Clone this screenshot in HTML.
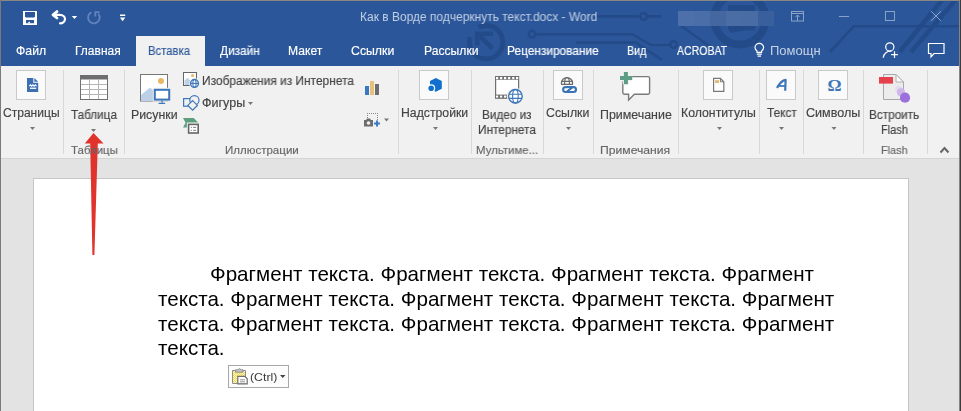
<!DOCTYPE html>
<html><head><meta charset="utf-8">
<style>
html,body{margin:0;padding:0;}
body{width:961px;height:411px;overflow:hidden;position:relative;background:#e3e3e3;font-family:"Liberation Sans",sans-serif;}
.t{position:absolute;white-space:nowrap;transform-origin:0 0;will-change:transform;}
.u{-webkit-text-stroke:0.15px currentColor;}
.a{position:absolute;}
svg{position:absolute;overflow:visible;}
</style></head><body>
<!-- title bar -->
<div class="a" style="left:0;top:0;width:961px;height:66px;background:#2b579a"></div>
<!-- circuit pattern -->
<svg style="left:0;top:0" width="961" height="66" viewBox="0 0 961 66">
 <g fill="none" stroke="#244b89" stroke-width="2.6">
  <path d="M470.2 37 A16.7 16.7 0 1 0 478.5 27.3" stroke-width="5"/>
  <path d="M477.2 45.5 V33.7 H493 M478.5 35 L492.5 48.5" stroke-width="4.6"/>
  <path d="M535.7 34.2 H632.4 L651 45 H670"/>
  <circle cx="532.2" cy="34.2" r="3.4"/>
  <circle cx="673.6" cy="44.5" r="3.4"/>
  <path d="M576 42.6 H636 L662 60"/>
  <path d="M596.8 16.4 H640.2 M647 16.4 H661.4"/>
  <circle cx="643.6" cy="16.4" r="3.4"/>
  <path d="M681 25.8 L712 48" />
  <circle cx="739.8" cy="19" r="25.5" stroke-width="8"/>
  <path d="M830 52 L853.6 26.3 H961"/>
  <path d="M899.6 52 L942 0 M911 52 L955.5 0" stroke-width="4.5"/>
 </g>
 <path d="M728 5 H755.3 V30.4 H745 L731 33 L728 29 Z" fill="#244b89"/>
</svg>
<!-- window frame -->
<div class="a" style="left:0;top:0;width:961px;height:1px;background:#8a8883"></div>
<div class="a" style="left:0;top:0;width:1px;height:411px;background:#7a7a7a"></div>
<div class="a" style="left:959px;top:0;width:1px;height:411px;background:#858585"></div>
<div class="a" style="left:960px;top:0;width:1px;height:411px;background:#3c3c3c"></div>
<!-- QAT -->
<svg style="left:0;top:0" width="140" height="34">
 <rect x="23" y="11" width="14" height="14" fill="#fff"/>
 <path d="M25 12 H35 V16.5 L34 17.5 H26 L25 16.5 Z" fill="#2b579a"/>
 <rect x="26" y="20" width="8" height="3.2" fill="#2b579a"/>
 <rect x="28.3" y="21.8" width="1.8" height="1.4" fill="#fff"/>
 <g fill="none" stroke="#fff" stroke-linecap="round" stroke-linejoin="round">
  <path d="M54 14.8 H60 A5 4.25 0 0 1 60 23.3" stroke-width="2.2"/>
  <path d="M57 11.6 L53 14.8 L57 18" stroke-width="2.8"/>
 </g>
 <path d="M71.8 16 H77.2 L74.5 19 Z" fill="#fff"/>
 <g fill="none" stroke="#6384be" stroke-width="1.8">
  <path d="M98.3 13.8 A5.8 5.8 0 1 1 91.5 12.2"/>
  <path d="M95.3 16.5 V12.2 H99.6"/>
 </g>
 <rect x="120" y="14.5" width="5.2" height="1.5" fill="#fff"/>
 <path d="M119.9 17.6 H125.3 L122.6 21.2 Z" fill="#fff"/>
</svg>
<!-- username blur -->
<div class="a" style="left:678px;top:11px;width:16px;height:15px;background:#4d70aa"></div>
<div class="a" style="left:694px;top:11px;width:16px;height:15px;background:#4a6ea8"></div>
<div class="a" style="left:710px;top:11px;width:16px;height:15px;background:#44679f"></div>
<div class="a" style="left:726px;top:11px;width:16px;height:15px;background:#4b6da6"></div>
<div class="a" style="left:742px;top:11px;width:16px;height:15px;background:#4a6ca5"></div>
<div class="a" style="left:758px;top:11px;width:16px;height:15px;background:#39609c"></div>
<!-- window buttons -->
<svg style="left:0;top:0" width="961" height="34">
 <g fill="none" stroke="#8aa1c8" stroke-width="1">
  <rect x="791.5" y="11.5" width="12" height="9.5"/>
  <path d="M791.5 13.5 H803.5 M797.5 21 V15 M795.5 17 L797.5 15 L799.5 17"/>
  <path d="M839 16.5 H849"/>
  <rect x="885.5" y="11.5" width="9" height="9"/>
  <path d="M931 11 L941 21 M941 11 L931 21"/>
 </g>
</svg>
<!-- active tab -->
<div class="a" style="left:136px;top:36px;width:69px;height:30px;background:#f1f1f1"></div>
<!-- tell me / share / comments -->
<svg style="left:0;top:0" width="961" height="66">
 <g fill="none" stroke="#fff" stroke-width="1.2">
  <path d="M757 52.3 V51 Q755 49.4 755 47.6 A4.3 4.3 0 1 1 763.6 47.6 Q763.6 49.4 761.6 51 V52.3 Z"/>
  <path d="M756.8 54.2 H761.8 M757.6 56.2 H761"/>
  <circle cx="889.8" cy="46.9" r="4.1"/>
  <path d="M883.2 57.8 A7.2 7.2 0 0 1 891.5 51.2"/>
  <path d="M894.5 51.2 V58 M891.1 54.6 H897.9"/>
  <path d="M928.5 43.5 H944 V53.5 H934 L931 57 V53.5 H928.5 Z"/>
 </g>
</svg>
<!-- ribbon -->
<div class="a" style="left:1px;top:66px;width:958px;height:92px;background:#f1f1f1"></div>
<div class="a" style="left:1px;top:158px;width:958px;height:1px;background:#d4d4d4"></div>
<!-- separators -->
<div class="a" style="left:63px;top:70px;width:1px;height:84px;background:#d8d8d8"></div>
<div class="a" style="left:124px;top:70px;width:1px;height:84px;background:#d8d8d8"></div>
<div class="a" style="left:398px;top:70px;width:1px;height:84px;background:#d8d8d8"></div>
<div class="a" style="left:471px;top:70px;width:1px;height:84px;background:#d8d8d8"></div>
<div class="a" style="left:543px;top:70px;width:1px;height:84px;background:#d8d8d8"></div>
<div class="a" style="left:593px;top:70px;width:1px;height:84px;background:#d8d8d8"></div>
<div class="a" style="left:678px;top:70px;width:1px;height:84px;background:#d8d8d8"></div>
<div class="a" style="left:759px;top:70px;width:1px;height:84px;background:#d8d8d8"></div>
<div class="a" style="left:803px;top:70px;width:1px;height:84px;background:#d8d8d8"></div>
<div class="a" style="left:863px;top:70px;width:1px;height:84px;background:#d8d8d8"></div>
<div class="a" style="left:927px;top:70px;width:1px;height:84px;background:#d8d8d8"></div>
<!-- icon boxes -->
<div class="a" style="left:16px;top:70px;width:28px;height:28px;background:#fafafa;border:1px solid #c9c9c9"></div>
<div class="a" style="left:419px;top:70px;width:28px;height:28px;background:#fafafa;border:1px solid #c9c9c9"></div>
<div class="a" style="left:553px;top:70px;width:28px;height:28px;background:#fafafa;border:1px solid #c9c9c9"></div>
<div class="a" style="left:703px;top:70px;width:28px;height:28px;background:#fafafa;border:1px solid #c9c9c9"></div>
<div class="a" style="left:766px;top:70px;width:28px;height:28px;background:#fafafa;border:1px solid #c9c9c9"></div>
<div class="a" style="left:818px;top:70px;width:28px;height:28px;background:#fafafa;border:1px solid #c9c9c9"></div>
<!-- ribbon icons -->
<svg style="left:0;top:0" width="961" height="160">
 <!-- pages icon -->
 <path d="M27 78 H33.3 V82.7 H38.2 V92 H27 Z" fill="#3e6fb3"/>
 <path d="M34.3 78 V81.7 H38.2 Z" fill="#3e6fb3"/>
 <path d="M29.3 86.2 L30.5 84.8 L31.7 86.2 L32.9 84.8 L34.1 86.2 L35.3 84.8 L36.5 86.2" fill="none" stroke="#fff" stroke-width="1.2"/>
 <rect x="30" y="87.6" width="6.2" height="1.3" fill="#fff"/>
 <!-- table -->
 <rect x="80.5" y="75.5" width="27" height="24" fill="#fff" stroke="#707070"/>
 <rect x="80" y="75" width="28" height="4.5" fill="#6e6e6e"/>
 <g stroke="#b4b4b4" stroke-width="1">
  <path d="M81 84.5 H107 M81 89.5 H107 M81 94.5 H107 M89.5 79.5 V99 M98.5 79.5 V99"/>
 </g>
 <!-- dropdown arrows -->
 <g fill="#777">
  <path d="M30 127 H35 L32.5 130 Z"/>
  <path d="M91 129 H96 L93.5 132 Z"/>
  <path d="M433 127 H438 L435.5 130 Z"/>
  <path d="M566 127 H571 L568.5 130 Z"/>
  <path d="M717 127 H722 L719.5 130 Z"/>
  <path d="M779 127 H784 L781.5 130 Z"/>
  <path d="M831.5 127 H836.5 L834 130 Z"/>
  <path d="M248 102 H253 L250.5 105 Z"/>
  <path d="M384 118.5 H389 L386.5 121.5 Z"/>
 </g>
 <!-- pictures -->
 <rect x="140.5" y="74.5" width="27" height="26.5" fill="#fff" stroke="#777"/>
 <circle cx="161" cy="81" r="3" fill="#e8b865"/>
 <path d="M141 101 V95 L149 88.3 Q150 87.5 151 88.3 L154 91 V101 Z" fill="#bcd0e8"/>
 <rect x="152.8" y="87.8" width="18.4" height="13.8" fill="#f1f1f1"/>
 <rect x="154.8" y="89.8" width="14.4" height="9.8" fill="#fff" stroke="#3d76b9" stroke-width="2"/>
 <path d="M162 100.5 V102.5 M158.6 103.4 H165.1" stroke="#3d76b9" stroke-width="1.3"/>
 <!-- online pictures small -->
 <rect x="183.5" y="72.5" width="13" height="13" fill="#fff" stroke="#666"/>
 <circle cx="192.5" cy="75.5" r="1.5" fill="#e8b865"/>
 <path d="M184.5 85 V80.5 L187.5 77.8 L190.3 80.5 V85 Z" fill="#bcd0e8"/>
 <circle cx="194.5" cy="83.4" r="5.3" fill="#f1f1f1"/>
 <circle cx="194.5" cy="83.4" r="3.9" fill="#fff" stroke="#3d76b9" stroke-width="1.4"/>
 <ellipse cx="194.5" cy="83.4" rx="1.6" ry="3.9" fill="none" stroke="#3d76b9" stroke-width="1.1"/>
 <path d="M191 83.4 H198" stroke="#3d76b9" stroke-width="1.1"/>
 <!-- shapes -->
 <rect x="183.6" y="98.6" width="7.6" height="7.6" fill="none" stroke="#3d76b9" stroke-width="1.2"/>
 <circle cx="194.4" cy="100.2" r="4.6" fill="#f1f1f1" stroke="#3d76b9" stroke-width="1.2"/>
 <path d="M192.6 100.6 L197.4 105.4 L192.6 110.2 L187.8 105.4 Z" fill="#f1f1f1" stroke="#3d76b9" stroke-width="1.2"/>
 <!-- smartart -->
 <path d="M183 118 H193.7 L198.3 122.8 H188 V127.4 H183 L185.6 122.7 Z" fill="#5b9e80"/>
 <rect x="186.8" y="122.6" width="13.2" height="12.2" fill="#f1f1f1"/>
 <rect x="188.6" y="124.4" width="9.6" height="8.6" fill="#fff" stroke="#666" stroke-width="1.6"/>
 <g fill="#8a8a8a"><rect x="190.8" y="126.9" width="1.1" height="1.1"/><rect x="190.8" y="129.8" width="1.1" height="1.1"/><rect x="193.1" y="126.9" width="3" height="1.1"/><rect x="193.1" y="129.8" width="3" height="1.1"/></g>
 <!-- chart -->
 <rect x="365" y="86" width="4" height="9" fill="#3b78c2"/>
 <rect x="370" y="81" width="4" height="14" fill="#e8c07a"/>
 <rect x="375" y="84" width="4" height="11" fill="#6d6d6d"/>
 <!-- screenshot -->
 <g fill="#8a8a8a"><rect x="367" y="113" width="1" height="1"/><rect x="369" y="113" width="1" height="1"/><rect x="371" y="113" width="1" height="1"/><rect x="373" y="113" width="1" height="1"/><rect x="375" y="113" width="1" height="1"/><rect x="377" y="113" width="1" height="1"/><rect x="377" y="115" width="1" height="1"/><rect x="377" y="117" width="1" height="1"/><rect x="377" y="119" width="1" height="1"/><rect x="377" y="121" width="1" height="1"/><rect x="367" y="115" width="1" height="1"/><rect x="367" y="117" width="1" height="1"/><rect x="367" y="119" width="1" height="1"/></g>
 <path d="M364 120 H366 L367 118.5 H370 L371 120 H373 V126.5 H364 Z" fill="#6d6d6d"/>
 <circle cx="368.5" cy="123" r="1.8" fill="#f1f1f1"/>
 <path d="M377 120.5 V126.5 M374 123.5 H380" stroke="#3e7ac3" stroke-width="2"/>
 <!-- addins hex -->
 <path d="M435.8 78 L441.8 81 V88.8 L435.8 91.8 L430 88.8 V81 Z" fill="#1170cd"/>
 <circle cx="431.2" cy="88.3" r="3.4" fill="#1170cd" stroke="#fcfcfc" stroke-width="1.2"/>
 <!-- video -->
 <rect x="495.6" y="76.6" width="23" height="21.4" fill="#fff" stroke="#707070" stroke-width="1.2"/>
 <rect x="495" y="76" width="24" height="3.8" fill="#707070"/>
 <rect x="495" y="94.6" width="24" height="4" fill="#707070"/>
 <g fill="#fff"><rect x="496" y="77" width="2.2" height="2.2"/><rect x="500" y="77" width="2.2" height="2.2"/><rect x="504" y="77" width="2.2" height="2.2"/><rect x="508" y="77" width="2.2" height="2.2"/><rect x="512.2" y="77" width="2.2" height="2.2"/><rect x="516" y="77" width="2.2" height="2.2"/><rect x="496" y="95.6" width="2.2" height="2"/><rect x="500" y="95.6" width="2.2" height="2"/><rect x="504" y="95.6" width="2.2" height="2"/></g>
 <circle cx="515.4" cy="96.3" r="8.6" fill="#f1f1f1"/>
 <circle cx="515.4" cy="96.3" r="6.8" fill="#fff" stroke="#3d76b9" stroke-width="1.4"/>
 <g fill="none" stroke="#3d76b9" stroke-width="1.1">
  <ellipse cx="515.4" cy="96.3" rx="2.8" ry="6.8"/>
  <path d="M509 94.2 H522 M509 98.4 H522"/>
 </g>
 <!-- links -->
 <g fill="none" stroke="#6a6a6a" stroke-width="1.2">
  <circle cx="567" cy="83.2" r="5.6"/>
  <ellipse cx="567" cy="83.2" rx="2.4" ry="5.6"/>
  <path d="M561.5 81.3 H572.5 M561.5 84.3 H572.5"/>
 </g>
 <rect x="560" y="85" width="18" height="9" fill="#fcfcfc"/>
 <g fill="none" stroke="#3a74b8" stroke-width="2.1">
  <rect x="563.1" y="87.1" width="12.9" height="4.9" rx="2.45"/>
  <path d="M566.8 91.6 L572.3 87.5"/>
 </g>
 <path d="M566.2 90 L568.3 88.6 M570.8 90.6 L572.9 89.1" stroke="#fcfcfc" stroke-width="0.8"/>
 <!-- comment -->
 <path d="M622.8 76.6 H648 Q649.6 76.6 649.6 78.2 V92.6 Q649.6 94.2 648 94.2 H634.4 L628.6 100 V94.2 H624.4 Q622.8 94.2 622.8 92.6 Z" fill="#fff" stroke="#7a7a7a" stroke-width="1.4"/>
 <path d="M625.9 72 V84.2 M620 77.9 H632.2" stroke="#f1f1f1" stroke-width="6.5"/>
 <path d="M625.9 72 V84.2 M620 77.9 H632.2" stroke="#5c9e84" stroke-width="4"/>
 <!-- header/footer -->
 <path d="M713.6 78.4 H720.4 L723.8 81.8 V91.3 H713.6 Z" fill="#fff" stroke="#777" stroke-width="1.2"/>
 <path d="M720.4 78.4 V81.8 H723.8" fill="none" stroke="#777" stroke-width="1"/>
 <rect x="715.1" y="80.2" width="3.9" height="2.8" fill="#e6b76a"/>
 <!-- text A -->
 <path d="M777 88 Q781 80.5 785.6 79.9 L785.2 90.8" fill="none" stroke="#3e76b9" stroke-width="2.2" stroke-linejoin="round"/>
 <path d="M777.5 86 H785.5" fill="none" stroke="#3e76b9" stroke-width="1.8"/>
 <!-- omega -->
 <text x="834.4" y="90.8" font-family="Liberation Serif" font-size="17.5" font-weight="bold" fill="#3e76b9" text-anchor="middle">Ω</text>
 <!-- flash -->
 <path d="M883.5 74.5 H896 L903.5 82 V99.5 H883.5 Z" fill="#ececec" stroke="#a8a8a8"/>
 <path d="M896 74.5 V82 H903.5 Z" fill="#fafafa" stroke="#b0b0b0"/>
 <rect x="879" y="77" width="14" height="6.6" fill="#e5404b"/>
 <circle cx="898.8" cy="89.4" r="3.6" fill="#e6dcf2"/>
 <circle cx="901" cy="92.2" r="4" fill="#cdb7ea"/>
 <circle cx="905" cy="97.7" r="5.1" fill="#9b70dc"/>
 <!-- chevron -->
 <path d="M940.5 152.5 L944.5 148 L948.5 152.5" fill="none" stroke="#666" stroke-width="2"/>
</svg>
<!-- document page -->
<div class="a" style="left:33px;top:178px;width:874px;height:240px;background:#fff;border:1px solid #c6c6c6"></div>
<div class="t" style="left:210px;top:262.3px;font-size:20.6px;line-height:24.7px;color:#000">Фрагмент текста. Фрагмент текста. Фрагмент текста. Фрагмент</div>
<div class="t" style="left:158px;top:286.9px;font-size:20.6px;line-height:24.7px;color:#000">текста. Фрагмент текста. Фрагмент текста. Фрагмент текста. Фрагмент</div>
<div class="t" style="left:158px;top:311.6px;font-size:20.6px;line-height:24.7px;color:#000">текста. Фрагмент текста. Фрагмент текста. Фрагмент текста. Фрагмент</div>
<div class="t" style="left:158px;top:336.3px;font-size:20.6px;line-height:24.7px;color:#000">текста.</div>
<!-- paste options -->
<div class="a" style="left:228px;top:365px;width:59px;height:21px;background:#fdfdfd;border:1px solid #a8a8a8"></div>
<svg style="left:0;top:0" width="961" height="411">
 <defs><pattern id="chk" width="2" height="2" patternUnits="userSpaceOnUse"><rect width="2" height="2" fill="#fff7c8"/><rect width="1" height="1" fill="#f2d94a"/><rect x="1" y="1" width="1" height="1" fill="#f2d94a"/></pattern></defs>
 <path d="M232.5 370.5 H245.5 V383.5 H232.5 Z" fill="url(#chk)" stroke="#8c8c8c"/>
 <path d="M235.5 369.8 H237.6 Q239.5 367.6 241.4 369.8 H243 V372.2 H235.5 Z" fill="#c4c4c4" stroke="#8a8a8a" stroke-width="0.9"/>
 <path d="M237.8 376.4 H244.8 L247.2 378.8 V383.8 H237.8 Z" fill="#fff" stroke="#6e6e6e" stroke-width="1.2"/>
 <path d="M240 379.8 H245 M240 381.8 H245" stroke="#8a8a8a" stroke-width="0.9"/>
 <path d="M280 375 H285.5 L282.75 378 Z" fill="#444"/>
</svg>
<!-- red arrow -->
<svg style="left:0;top:0" width="961" height="411">
 <path d="M93.5 133 L103.5 143.5 L97.8 143.5 L94.4 255 L92.4 255 L90.2 143.5 L84.8 143.5 Z" fill="#e0332c"/>
</svg>
<div class="t" style="left:360.40px;top:11.14px;font-size:12px;line-height:12px;color:#c3cfe3;font-weight:400;transform:scaleX(0.9975)">Как в Ворде подчеркнуть текст.docx - Word</div>
<div class="t u" style="left:15.98px;top:44.94px;font-size:12px;line-height:12px;color:#ffffff;font-weight:400;transform:scaleX(1.0214)">Файл</div>
<div class="t u" style="left:75.00px;top:44.94px;font-size:12px;line-height:12px;color:#ffffff;font-weight:400;transform:scaleX(1.0000)">Главная</div>
<div class="t u" style="left:148.46px;top:44.94px;font-size:12px;line-height:12px;color:#2b579a;font-weight:400;transform:scaleX(0.9409)">Вставка</div>
<div class="t u" style="left:220.00px;top:44.94px;font-size:12px;line-height:12px;color:#ffffff;font-weight:400;transform:scaleX(0.9850)">Дизайн</div>
<div class="t u" style="left:288.19px;top:44.94px;font-size:12px;line-height:12px;color:#ffffff;font-weight:400;transform:scaleX(1.0091)">Макет</div>
<div class="t u" style="left:351.48px;top:44.94px;font-size:12px;line-height:12px;color:#ffffff;font-weight:400;transform:scaleX(1.0244)">Ссылки</div>
<div class="t u" style="left:423.69px;top:44.94px;font-size:12px;line-height:12px;color:#ffffff;font-weight:400;transform:scaleX(1.0115)">Рассылки</div>
<div class="t u" style="left:506.51px;top:44.94px;font-size:12px;line-height:12px;color:#ffffff;font-weight:400;transform:scaleX(0.9901)">Рецензирование</div>
<div class="t u" style="left:626.91px;top:44.94px;font-size:12px;line-height:12px;color:#ffffff;font-weight:400;transform:scaleX(0.8905)">Вид</div>
<div class="t u" style="left:676.70px;top:44.94px;font-size:12px;line-height:12px;color:#ffffff;font-weight:400;transform:scaleX(0.8772)">ACROBAT</div>
<div class="t" style="left:770.22px;top:44.94px;font-size:12px;line-height:12px;color:#c5d1e5;font-weight:400;transform:scaleX(1.0844)">Помощн</div>
<div class="t u" style="left:3.40px;top:106.84px;font-size:12px;line-height:12px;color:#444444;font-weight:400;transform:scaleX(1.0036)">Страницы</div>
<div class="t u" style="left:70.60px;top:108.84px;font-size:12px;line-height:12px;color:#444444;font-weight:400;transform:scaleX(0.9745)">Таблица</div>
<div class="t u" style="left:130.57px;top:108.84px;font-size:12px;line-height:12px;color:#444444;font-weight:400;transform:scaleX(1.0273)">Рисунки</div>
<div class="t u" style="left:201.51px;top:75.04px;font-size:12px;line-height:12px;color:#444444;font-weight:400;transform:scaleX(0.9914)">Изображения из Интернета</div>
<div class="t u" style="left:201.66px;top:97.04px;font-size:12px;line-height:12px;color:#444444;font-weight:400;transform:scaleX(1.0425)">Фигуры</div>
<div class="t u" style="left:401.48px;top:106.84px;font-size:12px;line-height:12px;color:#444444;font-weight:400;transform:scaleX(1.0203)">Надстройки</div>
<div class="t u" style="left:482.22px;top:108.84px;font-size:12px;line-height:12px;color:#444444;font-weight:400;transform:scaleX(0.9796)">Видео из</div>
<div class="t u" style="left:477.72px;top:124.34px;font-size:12px;line-height:12px;color:#444444;font-weight:400;transform:scaleX(0.9845)">Интернета</div>
<div class="t u" style="left:546.47px;top:106.84px;font-size:12px;line-height:12px;color:#444444;font-weight:400;transform:scaleX(1.0268)">Ссылки</div>
<div class="t u" style="left:599.57px;top:108.84px;font-size:12px;line-height:12px;color:#444444;font-weight:400;transform:scaleX(1.0338)">Примечание</div>
<div class="t u" style="left:681.48px;top:106.84px;font-size:12px;line-height:12px;color:#444444;font-weight:400;transform:scaleX(1.0236)">Колонтитулы</div>
<div class="t u" style="left:767.20px;top:106.84px;font-size:12px;line-height:12px;color:#444444;font-weight:400;transform:scaleX(0.9833)">Текст</div>
<div class="t u" style="left:806.45px;top:106.84px;font-size:12px;line-height:12px;color:#444444;font-weight:400;transform:scaleX(1.0480)">Символы</div>
<div class="t u" style="left:869.42px;top:108.84px;font-size:12px;line-height:12px;color:#444444;font-weight:400;transform:scaleX(0.9800)">Встроить</div>
<div class="t u" style="left:881.39px;top:124.34px;font-size:12px;line-height:12px;color:#444444;font-weight:400;transform:scaleX(0.9143)">Flash</div>
<div class="t u" style="left:71.10px;top:145.47px;font-size:11.5px;line-height:11.5px;color:#666666;font-weight:400;transform:scaleX(0.9957)">Таблицы</div>
<div class="t u" style="left:224.70px;top:145.47px;font-size:11.5px;line-height:11.5px;color:#666666;font-weight:400;transform:scaleX(1.0028)">Иллюстрации</div>
<div class="t u" style="left:475.91px;top:145.47px;font-size:11.5px;line-height:11.5px;color:#666666;font-weight:400;transform:scaleX(0.9918)">Мультиме...</div>
<div class="t u" style="left:600.24px;top:145.47px;font-size:11.5px;line-height:11.5px;color:#666666;font-weight:400;transform:scaleX(1.0569)">Примечания</div>
<div class="t u" style="left:881.35px;top:145.47px;font-size:11.5px;line-height:11.5px;color:#666666;font-weight:400;transform:scaleX(0.9481)">Flash</div>
<div class="t" style="left:249.58px;top:372.29px;font-size:11px;line-height:11px;color:#3a3a3a;font-weight:400;transform:scaleX(1.1174)">(Ctrl)</div>
</body></html>
